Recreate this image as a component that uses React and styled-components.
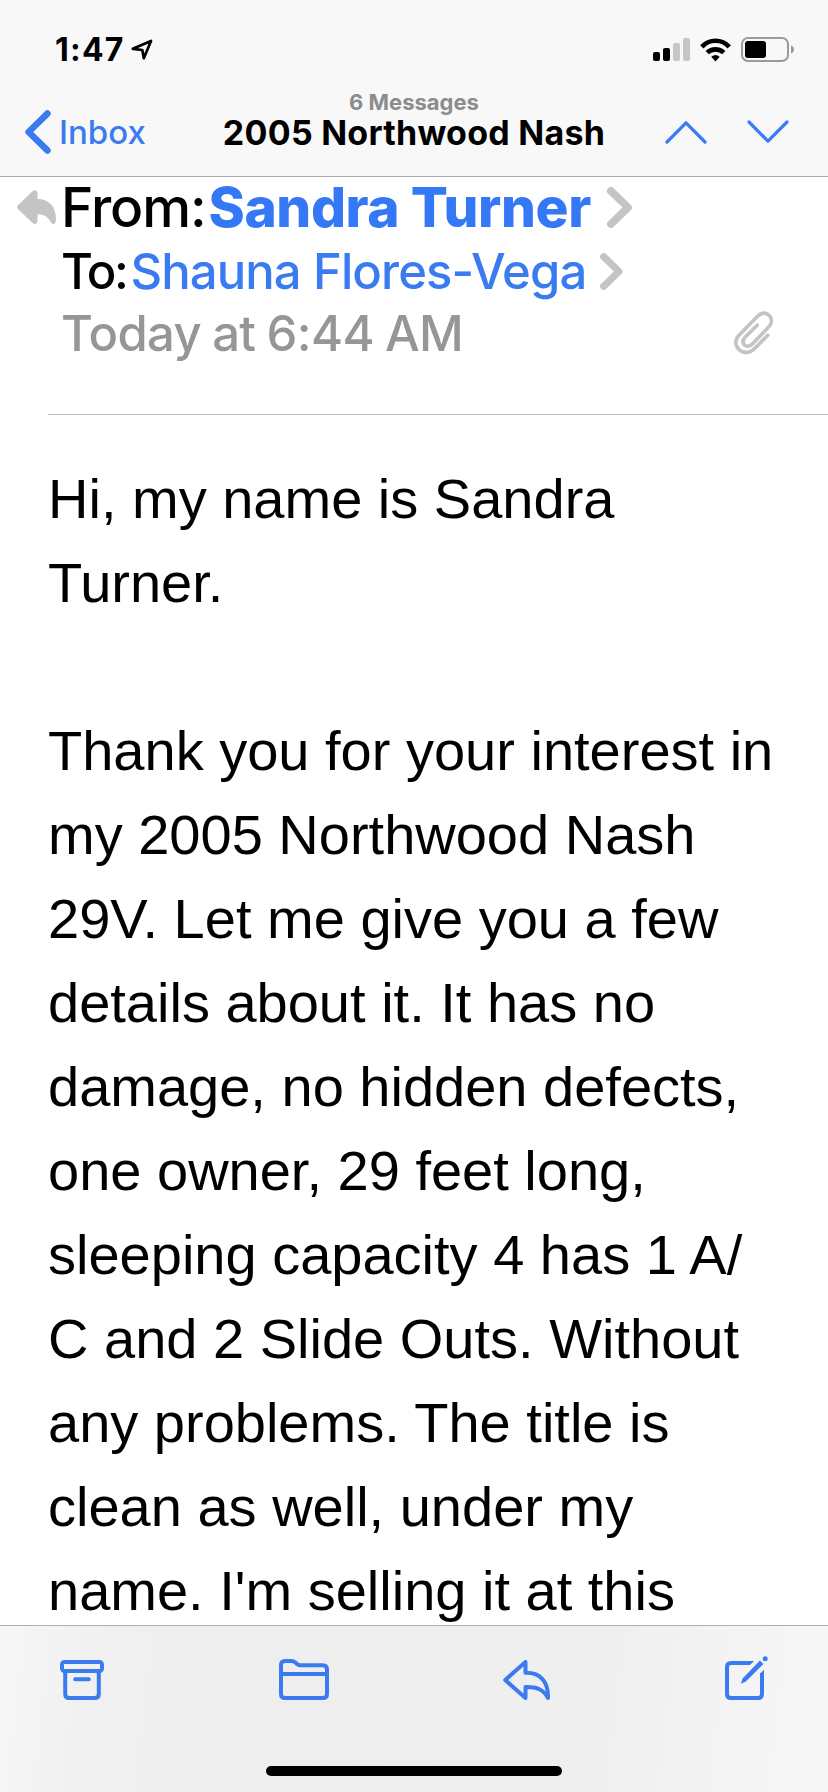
import React from 'react';
import styled, { createGlobalStyle } from 'styled-components';

const message = `Hi, my name is Sandra
Turner.

Thank you for your interest in
my 2005 Northwood Nash
29V. Let me give you a few
details about it. It has no
damage, no hidden defects,
one owner, 29 feet long,
sleeping capacity 4 has 1 A/
C and 2 Slide Outs. Without
any problems. The title is
clean as well, under my
name. I'm selling it at this`;

// --- ICONS ---
const LocationIcon = () => (
  <svg width="22" height="22" viewBox="0 0 22 22" fill="none" stroke="#000" strokeWidth="2.7" strokeLinejoin="round">
    <path d="M1.8 9.8 20 2 12.8 19.2 11.3 11z" />
  </svg>
);

const SignalIcon = () => (
  <svg width="37" height="23" viewBox="0 0 37 23">
    <rect x="0" y="14" width="7" height="9" rx="2" />
    <rect x="10" y="10" width="7" height="13" rx="2" />
    <rect x="20" y="5" width="7" height="18" rx="2" fill="#c6c6c6" />
    <rect x="30" y="0" width="7" height="23" rx="2" fill="#c6c6c6" />
  </svg>
);

const WifiIcon = () => (
  <svg width="31" height="24" viewBox="0 0 31 24" fill="none" stroke="#000" strokeWidth="4.7">
    <path d="M1.8 8.8A18.5 18.5 0 0 1 29.2 8.8" />
    <path d="M7.2 14.7A11.8 11.8 0 0 1 23.8 14.7" />
    <path d="M11.3 18.8Q15.5 15.2 19.7 18.8L15.5 23.6z" fill="#000" stroke="none" />
  </svg>
);

const BatteryIcon = () => (
  <svg width="53" height="25" viewBox="0 0 53 25">
    <rect x="1" y="1" width="46" height="23" rx="6" fill="none" stroke="#9b9b9b" strokeWidth="2" />
    <rect x="4" y="4" width="21" height="17" rx="3" />
    <path d="M50 8.5Q53 9.6 53 12.5T50 16.5z" fill="#9b9b9b" />
  </svg>
);

const BackIcon = () => (
  <svg width="26" height="44" viewBox="0 0 26 44" fill="none" stroke="currentColor" strokeWidth="6.6" strokeLinecap="round" strokeLinejoin="round">
    <path d="M22.4 3.6 3.6 22 22.4 40.4" />
  </svg>
);

const ArrowIcon = ({ d }) => (
  <svg width="42" height="24" viewBox="0 0 42 24" fill="none" stroke="currentColor" strokeWidth="3.2" strokeLinecap="round" strokeLinejoin="round">
    <path d={d} />
  </svg>
);

const DisclosureIcon = ({ size }) => (
  <svg width={size * 0.61} height={size} viewBox="0 0 25 41" fill="none" stroke="#c4c4c6" strokeWidth="7.8" strokeLinecap="round" strokeLinejoin="round">
    <path d="M4 4 21 20.5 4 37" />
  </svg>
);

const RepliedIcon = () => (
  <svg width="39" height="34" viewBox="0 0 39 34" fill="#c4c4c6">
    <path d="M1 15.2 15.5 1.2C17.6-.8 20.5.2 20.5 3V9C31.5 9 39 16 39 29.5C39 34.5 35.5 35.2 33.8 32.2C30.5 26.5 27 24.3 20.5 24.3V31C20.5 33.8 17.6 35 15.5 33L1 19Q-1 17 1 15.2z" />
  </svg>
);

const ClipIcon = () => (
  <svg width="39" height="44" viewBox="0 0 39 44" fill="none" stroke="#c4c4c6" strokeWidth="3.7" strokeLinecap="round" strokeLinejoin="round">
    <path d="M33.8 24.3 20.5 37.5C15.5 42.8 8.7 42.4 5 38.5C.8 34.3.8 28.6 5 24.3L22.8 6C27 1.3 32 1 35 4.2C38.5 7.8 38 12.5 34.8 15.8L18.6 32.8C15.8 35.7 12.5 36 10.5 34C8.3 31.7 8.6 28.8 11.3 26L23.2 14.3" />
  </svg>
);

const ArchiveIcon = () => (
  <svg width="44" height="40" viewBox="0 0 44 40" fill="none" stroke="currentColor" strokeWidth="4" strokeLinecap="round">
    <rect x="2" y="2" width="40" height="9" rx="2.5" />
    <path d="M5.2 11V34Q5.200 38 9.2 38H34.8Q38.8 38 38.8 34V11M15.2 19.300H28.8" />
  </svg>
);

const FolderIcon = () => (
  <svg width="50" height="41" viewBox="0 0 50 41" fill="none" stroke="currentColor" strokeWidth="4" strokeLinejoin="round">
    <path d="M2 6Q2 2 6 2H12.5Q14.6 2 16 3.2L18 5Q19.3 6.2 21 6.2H43.5Q48 6.2 48 10.5V35Q48 39 44 39H6Q2 39 2 35zM2 15H48" />
  </svg>
);

const ReplyIcon = () => (
  <svg width="47" height="40" viewBox="0 0 47 40" fill="none" stroke="currentColor" strokeWidth="4" strokeLinejoin="round">
    <path d="M2.2 20 22.5 2V12.8C36 12.5 45.5 20 45 38C40.5 29.5 34 26.8 22.5 27V38z" />
  </svg>
);

const ComposeIcon = () => (
  <svg width="43" height="44" viewBox="0 0 43 44" fill="none" stroke="currentColor" strokeWidth="4">
    <path d="M25 7H6Q2 7 2 11V38Q2 42 6 42H33Q37 42 37 38V17" />
    <path d="M24.5 5H29L25 9h-.5zM39 13.800V18h-4v-.4z" fill="currentColor" stroke="none" />
    <path d="M34.900 4.400 38.400 7.900 20.6 25.7 15.8 27.8 17.600 22.400z" fill="currentColor" stroke="none" />
    <circle cx="40.2" cy="2.700" r="2.500" fill="currentColor" stroke="none" />
  </svg>
);

export default function App() {
  return (
    <Screen>
      <GlobalStyle />

      <Header>
        <StatusBar>
          <Clock>
            1:47
            <LocationIcon />
          </Clock>
          <StatusIcons>
            <SignalIcon />
            <WifiIcon />
            <BatteryIcon />
          </StatusIcons>
        </StatusBar>
        <NavBar>
          <BackButton>
            <BackIcon />
            Inbox
          </BackButton>
          <Heading>
            <Count>6 Messages</Count>
            <Title>2005 Northwood Nash</Title>
          </Heading>
          <Pager>
            <PagerButton aria-label="Previous message">
              <ArrowIcon d="M2 22 21 2.8 40 22" />
            </PagerButton>
            <PagerButton aria-label="Next message">
              <ArrowIcon d="M2 2 21 21.2 40 2" />
            </PagerButton>
          </Pager>
        </NavBar>
      </Header>

      <Envelope>
        <FromRow>
          <RepliedIcon />
          <FromLabel>From:</FromLabel>
          <Sender>Sandra Turner</Sender>
          <DisclosureIcon size={41} />
        </FromRow>
        <ToRow>
          <ToLabel>To:</ToLabel>
          <Recipient>Shauna Flores-Vega</Recipient>
          <DisclosureIcon size={37} />
        </ToRow>
        <DateRow>
          <span>Today at 6:44 AM</span>
          <ClipIcon />
        </DateRow>
      </Envelope>

      <Body>{message}</Body>

      <Toolbar>
        <Actions>
          <Action aria-label="Archive"><ArchiveIcon /></Action>
          <Action aria-label="Move"><FolderIcon /></Action>
          <Action aria-label="Reply"><ReplyIcon /></Action>
          <Action aria-label="Compose"><ComposeIcon /></Action>
        </Actions>
        <HomeIndicator />
      </Toolbar>
    </Screen>
  );
}

// --- STYLES ---
const GlobalStyle = createGlobalStyle`
  * {
    box-sizing: border-box;
  }

  body {
    margin: 0;
    background: #fff;
  }

  svg {
    display: block;
    flex: none;
  }

  button {
    padding: 0;
    border: none;
    background: none;
    font: inherit;
    color: inherit;
  }
`;

const Screen = styled.div`
  display: flex;
  flex-direction: column;
  width: 828px;
  height: 1792px;
  overflow: hidden;
  background: #fff;
  color: #000;
  font-family: Inter, 'Liberation Sans', sans-serif;
  white-space: nowrap;
`;

const Header = styled.header`
  flex: none;
  height: 177px;
  background: #f8f8f8;
  border-bottom: 1px solid #acacac;
`;

const StatusBar = styled.div`
  display: flex;
  align-items: center;
  justify-content: space-between;
  height: 84px;
  padding: 15px 34px 0 55px;
`;

const Clock = styled.div`
  display: flex;
  align-items: center;
  gap: 6px;
  font-size: 32px;
  font-weight: 700;
  letter-spacing: 1.2px;
`;

const StatusIcons = styled.div`
  display: flex;
  align-items: center;
  gap: 10px;
`;

const NavBar = styled.nav`
  display: grid;
  grid-template-columns: 1fr auto 1fr;
  align-items: center;
  height: 92px;
  padding: 4px 39px 0 25px;
`;

const BackButton = styled.button`
  display: flex;
  align-items: center;
  gap: 8px;
  color: #3a7cf0;
  font-size: 33px;
  font-weight: 500;
`;

const Heading = styled.div`
  align-self: start;
  /* side paddings of the bar differ by 14px */
  margin-left: 14px;
  text-align: center;
`;

const Count = styled.div`
  color: #8c8c8c;
  font-size: 22px;
  font-weight: 700;
  line-height: 28px;
`;

const Title = styled.div`
  font-size: 34px;
  font-weight: 700;
  line-height: 34px;
  letter-spacing: 0.25px;
`;

const Pager = styled.div`
  display: flex;
  justify-content: flex-end;
  gap: 40px;
  color: #3a7cf6;
`;

const PagerButton = styled.button``;

const Envelope = styled.section`
  flex: none;
  height: 238px;
  margin-left: 48px;
  border-bottom: 1px solid #c0c0c2;
`;

const Row = styled.div`
  display: flex;
  align-items: center;
  height: 62px;
  padding-left: 13px;
  font-size: 49px;
  font-weight: 500;
  letter-spacing: -0.9px;
`;

const FromRow = styled(Row)`
  height: 60px;
  margin: 0 0 3px -31px;
  padding-left: 0;
  font-size: 55px;

  > svg:last-child {
    margin-left: 16px;
  }
`;

const ToRow = styled(Row)`
  > svg {
    margin-left: 14px;
  }
`;

const DateRow = styled(Row)`
  justify-content: space-between;
  padding-right: 55px;
  color: #969696;
  letter-spacing: -0.65px;
  word-spacing: -1.3px;
`;

const FromLabel = styled.span`
  margin: 0 3px 0 5px;
  letter-spacing: -1.1px;
`;

const ToLabel = styled.span`
  margin-right: 4px;
  letter-spacing: -2.4px;
`;

const Sender = styled.span`
  color: #3578f6;
  font-weight: 800;
  letter-spacing: -0.4px;
`;

const Recipient = styled.span`
  color: #3a7cf0;
`;

const Body = styled.article`
  flex: 1;
  min-height: 0;
  overflow: hidden;
  padding: 42px 48px 0;
  font-family: 'Liberation Sans', Arial, sans-serif;
  font-size: 56px;
  line-height: 84px;
  white-space: pre;
`;

const Toolbar = styled.footer`
  flex: none;
  height: 167px;
  border-top: 1px solid #b0b0b0;
  background: linear-gradient(97deg, #f7f7f7 0%, #f4f4f4 5%, #f0f0f0 12%, #eeeeee 40%, #efefef 72%, #f4f4f4 88%, #f7f7f7 100%);
`;

const Actions = styled.div`
  display: flex;
  align-items: flex-end;
  justify-content: space-between;
  height: 74px;
  padding: 0 60px;
`;

const Action = styled.button`
  color: #3a7cf0;
`;

const HomeIndicator = styled.div`
  width: 296px;
  height: 10px;
  margin: 66px auto 0;
  border-radius: 5px;
  background: #000;
`;
